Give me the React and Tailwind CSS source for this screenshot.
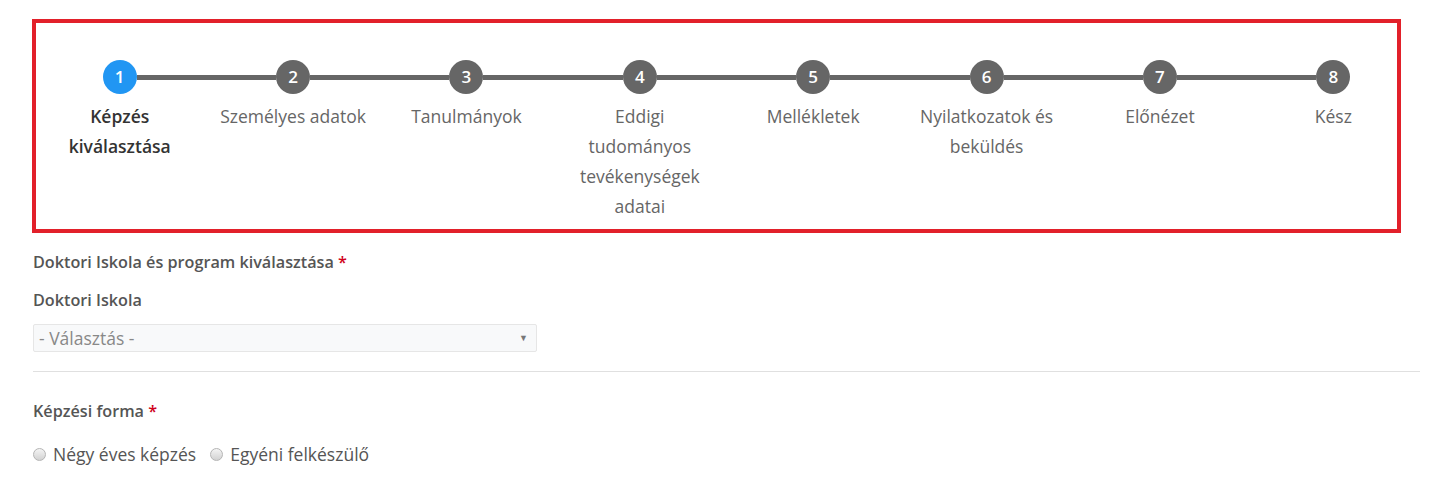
const steps = [
    "Képzés kiválasztása",
    "Személyes adatok",
    "Tanulmányok",
    "Eddigi tudományos tevékenységek adatai",
    "Mellékletek",
    "Nyilatkozatok és beküldés",
    "Előnézet",
    "Kész",
];

function Radio({ label }) {
    return (
        <label className="flex items-center gap-[7px]">
            <span className="w-[13px] h-[13px] rounded-full border border-[#b5b5b5] bg-gradient-to-b from-[#f4f4f4] to-[#d2d2d2]"></span>
            <span>{label}</span>
        </label>
    );
}

function App() {
    const active = 0;

    return (
        <div className="relative min-h-[486px] bg-white px-[33px] pt-[60px] text-[#555]" style={{ fontFamily: '"Open Sans", sans-serif' }}>
            {/* highlight box over the stepper */}
            <div className="absolute left-[32px] top-[19px] w-[1369px] h-[214px] border-[4px] border-[#e2202a] pointer-events-none"></div>

            {/* Stepper */}
            <div className="grid grid-cols-8 w-[1387px]">
                {steps.map((step, i) => (
                    <div key={i} className="flex flex-col">
                        <div className="flex items-center">
                            <div className={`flex-1 h-[5px] ${i === 0 ? "bg-transparent" : "bg-[#666]"}`}></div>
                            <div
                                className={`w-[34px] h-[34px] rounded-full flex items-center justify-center text-white text-[17px] font-semibold ${i === active ? "bg-[#2196f3]" : "bg-[#666]"}`}
                            >
                                {i + 1}
                            </div>
                            <div className={`flex-1 h-[5px] ${i === steps.length - 1 ? "bg-transparent" : "bg-[#666]"}`}></div>
                        </div>
                        <div
                            className={`mt-[7px] px-[12px] text-center text-[17.5px] leading-[30px] ${i === active ? "font-semibold text-[#333]" : "text-[#666]"}`}
                        >
                            {step}
                        </div>
                    </div>
                ))}
            </div>

            {/* Form */}
            <div className="w-[1387px] mt-[30px] text-[16.2px] leading-[22px]">
                <div className="font-semibold">
                    Doktori Iskola és program kiválasztása <span className="text-[#d0021b]">*</span>
                </div>
                <div className="font-semibold mt-[16px]">Doktori Iskola</div>
                <div className="mt-[13px] w-[504px] h-[28px] flex items-center justify-between bg-[#f8f9fa] border border-[#e6e6e6] rounded-[2px] pl-[5px] pr-[8px] text-[17.5px] text-[#888]">
                    <span>- Választás -</span>
                    <span className="text-[9px] text-[#777]">▼</span>
                </div>
                <hr className="mt-[19px] border-0 border-t border-[#e0e0e0]" />
                <div className="font-semibold mt-[28px]">
                    Képzési forma <span className="text-[#d0021b]">*</span>
                </div>
                <div className="mt-[21px] flex items-center gap-[14px] text-[17.5px]">
                    <Radio label="Négy éves képzés" />
                    <Radio label="Egyéni felkészülő" />
                </div>
            </div>
        </div>
    );
}

export default App;
